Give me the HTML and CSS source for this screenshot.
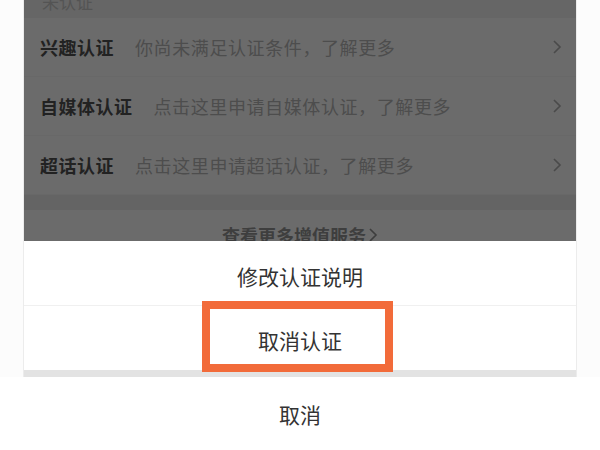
FILE: index.html
```html
<!DOCTYPE html>
<html lang="zh">
<head>
<meta charset="utf-8">
<title>认证</title>
<link rel="stylesheet" href="styles.css">
</head>
<body>
<div class="page">
  <div class="phone">
    <div class="dim">
      <div class="sec-head"><span>未认证</span></div>
      <div class="row">
        <span class="label">兴趣认证</span>
        <span class="desc">你尚未满足认证条件，了解更多</span>
        <svg class="chev" width="10" height="16" viewBox="0 0 10 16"><polyline points="2,2 8,8 2,14" fill="none" stroke="#4a4a4a" stroke-width="1.6"/></svg>
      </div>
      <div class="row">
        <span class="label">自媒体认证</span>
        <span class="desc">点击这里申请自媒体认证，了解更多</span>
        <svg class="chev" width="10" height="16" viewBox="0 0 10 16"><polyline points="2,2 8,8 2,14" fill="none" stroke="#4a4a4a" stroke-width="1.6"/></svg>
      </div>
      <div class="row">
        <span class="label">超话认证</span>
        <span class="desc">点击这里申请超话认证，了解更多</span>
        <svg class="chev" width="10" height="16" viewBox="0 0 10 16"><polyline points="2,2 8,8 2,14" fill="none" stroke="#4a4a4a" stroke-width="1.6"/></svg>
      </div>
      <div class="band"></div>
      <div class="more">查看更多增值服务<svg class="more-chev" width="10" height="16" viewBox="0 0 10 16"><polyline points="2,2 8,8 2,14" fill="none" stroke="#3d3d3d" stroke-width="1.6"/></svg></div>
    </div>
    <div class="sheet">
      <div class="item first">修改认证说明</div>
      <div class="item">取消认证</div>
    </div>
    <div class="gap"></div>
  </div>
  <div class="cancel">取消</div>
  <div class="highlight"></div>
</div>
</body>
</html>
```
FILE: styles.css
```css
html, body {
  margin: 0;
  padding: 0;
  background: #fcfcfc;
}
body {
  font-family: "Noto Sans CJK SC", "Noto Sans", sans-serif;
}
.page {
  position: relative;
  width: 600px;
  height: 450px;
  overflow: hidden;
  background: #fcfcfc;
}
.phone {
  margin: 0 23px;
  width: 554px;
  border-left: 1px solid #ececec;
  border-right: 1px solid #ececec;
  box-sizing: border-box;
}
.dim {
  height: 241px;
  overflow: hidden;
  background: #6b6b6b;
}
.sec-head {
  height: 18px;
  background: #666666;
  padding-left: 18px;
  font-size: 17px;
  line-height: 4px;
  color: #545454;
}
.row {
  height: 59px;
  display: flex;
  align-items: center;
  padding: 0 14px 0 16px;
  border-bottom: 1px solid #686868;
  box-sizing: border-box;
}
.label {
  font-size: 18px;
  letter-spacing: 0.5px;
  font-weight: 700;
  color: #222222;
  margin-right: 21px;
}
.desc {
  flex: 1;
  font-size: 18px;
  letter-spacing: 0.6px;
  color: #4d4d4d;
}
.chev {
  flex: none;
}
.band {
  height: 15px;
  background: #646464;
}
.more {
  height: 46px;
  display: flex;
  align-items: center;
  justify-content: center;
  font-size: 18px;
  font-weight: 700;
  color: #3e3e3e;
  padding-top: 2px;
}
.more-chev {
  margin-left: 2px;
}
.sheet {
  background: #ffffff;
}
.item {
  height: 64px;
  display: flex;
  align-items: center;
  justify-content: center;
  font-size: 21px;
  color: #333333;
  padding-top: 4px;
  box-sizing: border-box;
}
.item.first {
  height: 65px;
  padding-top: 6px;
  border-bottom: 1px solid #f0f0f0;
}
.gap {
  height: 7px;
  background: #e3e3e3;
}
.cancel {
  height: 73px;
  display: flex;
  align-items: center;
  justify-content: center;
  font-size: 21px;
  color: #333333;
  background: #ffffff;
}
.highlight {
  position: absolute;
  left: 202px;
  top: 301px;
  width: 191px;
  height: 71px;
  border: 8px solid #f26b3a;
  box-sizing: border-box;
}
```
